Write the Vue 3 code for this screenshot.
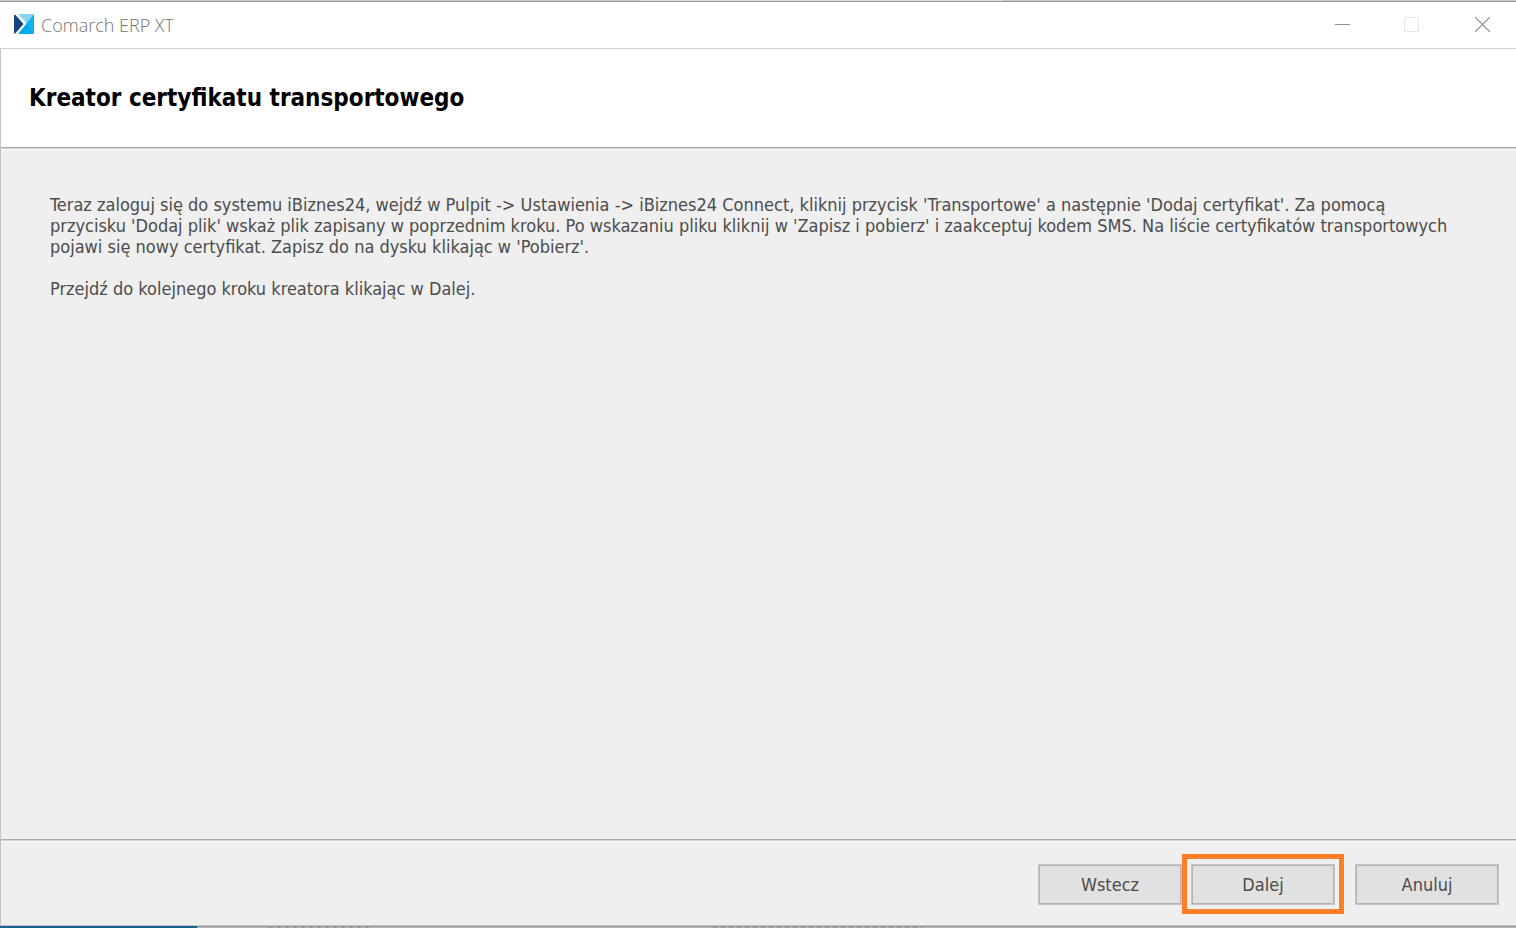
<script setup>
const steps = [
  "Teraz zaloguj się do systemu iBiznes24, wejdź w Pulpit -> Ustawienia -> iBiznes24 Connect, kliknij przycisk 'Transportowe' a następnie 'Dodaj certyfikat'. Za pomocą przycisku 'Dodaj plik' wskaż plik zapisany w poprzednim kroku. Po wskazaniu pliku kliknij w 'Zapisz i pobierz' i zaakceptuj kodem SMS. Na liście certyfikatów transportowych pojawi się nowy certyfikat. Zapisz do na dysku klikając w 'Pobierz'.",
  'Przejdź do kolejnego kroku kreatora klikając w Dalej.',
]
</script>

<template>
  <div class="desktop">
    <div class="backdrop-top"><span class="pane-a"></span><span class="pane-b"></span><span class="pane-c"></span></div>
    <main class="window">
      <header class="titlebar">
        <svg class="logo" viewBox="0 0 20 20" aria-hidden="true">
          <path d="M0 1L2 1L10 10L2 19.500H0Z" fill="#12457c" />
          <path d="M4 0H20L12.500 9Z" fill="#86d3f5" />
          <path d="M20 0V20L12 9.500Z" fill="#12b1ec" />
          <path d="M12.500 9L20 20H4Z" fill="#00a9ec" />
          <path d="M2 0L11 10L2 20" fill="none" stroke="#fff" stroke-width="2" />
        </svg>
        <span class="caption">Comarch ERP XT</span>
        <div class="controls">
          <button type="button" class="minimize" aria-label="Minimalizuj">
            <svg viewBox="0 0 15 15"><path d="M0 7.500H15" stroke="#8f8f8f" /></svg>
          </button>
          <button type="button" class="maximize" aria-label="Maksymalizuj" disabled>
            <svg viewBox="0 0 15 15"><path d="M.5 .5H14.500V14.500H.5Z" fill="none" stroke="#e7e7e7" /></svg>
          </button>
          <button type="button" class="close" aria-label="Zamknij">
            <svg viewBox="0 0 15 15"><path d="M0 0L15 15M15 0L0 15" stroke="#888" stroke-width="1.100" /></svg>
          </button>
        </div>
      </header>
      <section class="heading">
        <h1>Kreator certyfikatu transportowego</h1>
      </section>
      <section class="content">
        <p v-for="step in steps" :key="step">{{ step }}</p>
      </section>
      <footer class="actions">
        <button type="button">Wstecz</button>
        <button type="button" class="highlighted">Dalej</button>
        <button type="button" class="cancel">Anuluj</button>
      </footer>
    </main>
    <div class="backdrop-bottom"><span class="blue"></span><span class="marks first"></span><span class="marks second"></span></div>
  </div>
</template>

<style>
body {
  margin: 0;
}
</style>

<style scoped>
.desktop {
  display: flex;
  flex-direction: column;
  height: 100vh;
  background: #efefef;
  font-family: "DejaVu Sans Condensed", "DejaVu Sans", sans-serif;
  font-size: 18px;
  color: #4c4c4c;
}
.backdrop-top {
  display: flex;
  height: 1px;
  border-bottom: 1px solid #999;
}
.pane-a {
  flex: 640;
  background: #c9c9c9;
}
.pane-b {
  flex: 362;
  background: #dedede;
}
.pane-c {
  flex: 514;
  background: #c9c9c9;
}
.window {
  flex: 1;
  display: flex;
  flex-direction: column;
  border-left: 1px solid #c2c2c2;
}
.titlebar {
  display: flex;
  align-items: center;
  height: 46px;
  padding-left: 13px;
  margin-left: -1px;
  background: #fff;
  border-bottom: 1px solid #d1d1d1;
}
.logo {
  width: 20px;
  height: 20px;
  margin: 0 7px 2px 1px;
}
.caption {
  font-family: "Open Sans", "Noto Sans", sans-serif;
  font-weight: 300;
  font-size: 18px;
  color: #757575;
}
.controls {
  display: flex;
  align-self: flex-start;
  margin-left: auto;
}
.controls button {
  display: flex;
  align-items: center;
  justify-content: center;
  height: 45px;
  padding: 0;
  border: 0;
  background: none;
}
.minimize {
  width: 63px;
}
.maximize {
  width: 75px;
}
.close {
  width: 67px;
}
.controls svg {
  width: 15px;
  height: 15px;
}
.heading {
  display: flex;
  align-items: center;
  height: 98px;
  padding-left: 28px;
  background: #fff;
  border-bottom: 1px solid #a8a8a8;
  box-shadow: 0 1px #d4d4d4, 0 2px #fafafa;
}
h1 {
  margin: 0;
  font-size: 24px;
  line-height: 28px;
  color: #000;
}
.content {
  flex: 1;
  padding: 46px 56px 0 49px;
  border-bottom: 1px solid #a8a8a8;
  box-shadow: 0 1px #d4d4d4, 0 2px #fafafa;
}
p {
  margin: 0 0 21px;
  line-height: 21px;
}
.actions {
  display: flex;
  justify-content: flex-end;
  gap: 9px;
  padding: 24px 17px 20px;
}
.actions button {
  width: 144px;
  height: 41px;
  padding: 0;
  border: 1px solid #c4c4c4;
  box-shadow: inset 0 0 0 1px #b3b3b3;
  background: #e1e1e1;
  font: inherit;
  color: inherit;
}
.actions .cancel {
  margin-left: 11px;
}
.highlighted {
  position: relative;
}
.highlighted::after {
  content: "";
  position: absolute;
  inset: -11px -10px -10px -10px;
  border: 5px solid #ff7f27;
}
.backdrop-bottom {
  display: flex;
  height: 2px;
  background: linear-gradient(#999 50%, #b9b9b9 50%);
  border-top: 1px solid #c2c2c2;
}
.blue {
  flex: 0 0 13%;
  background: #17658f;
}
.marks {
  width: 104px;
  margin: 1px 0 0 72px;
  background: repeating-linear-gradient(90deg, #9d9d9d 0 4px, #b9b9b9 4px 8px);
}
.second {
  width: 210px;
  margin-left: 340px;
}
</style>
